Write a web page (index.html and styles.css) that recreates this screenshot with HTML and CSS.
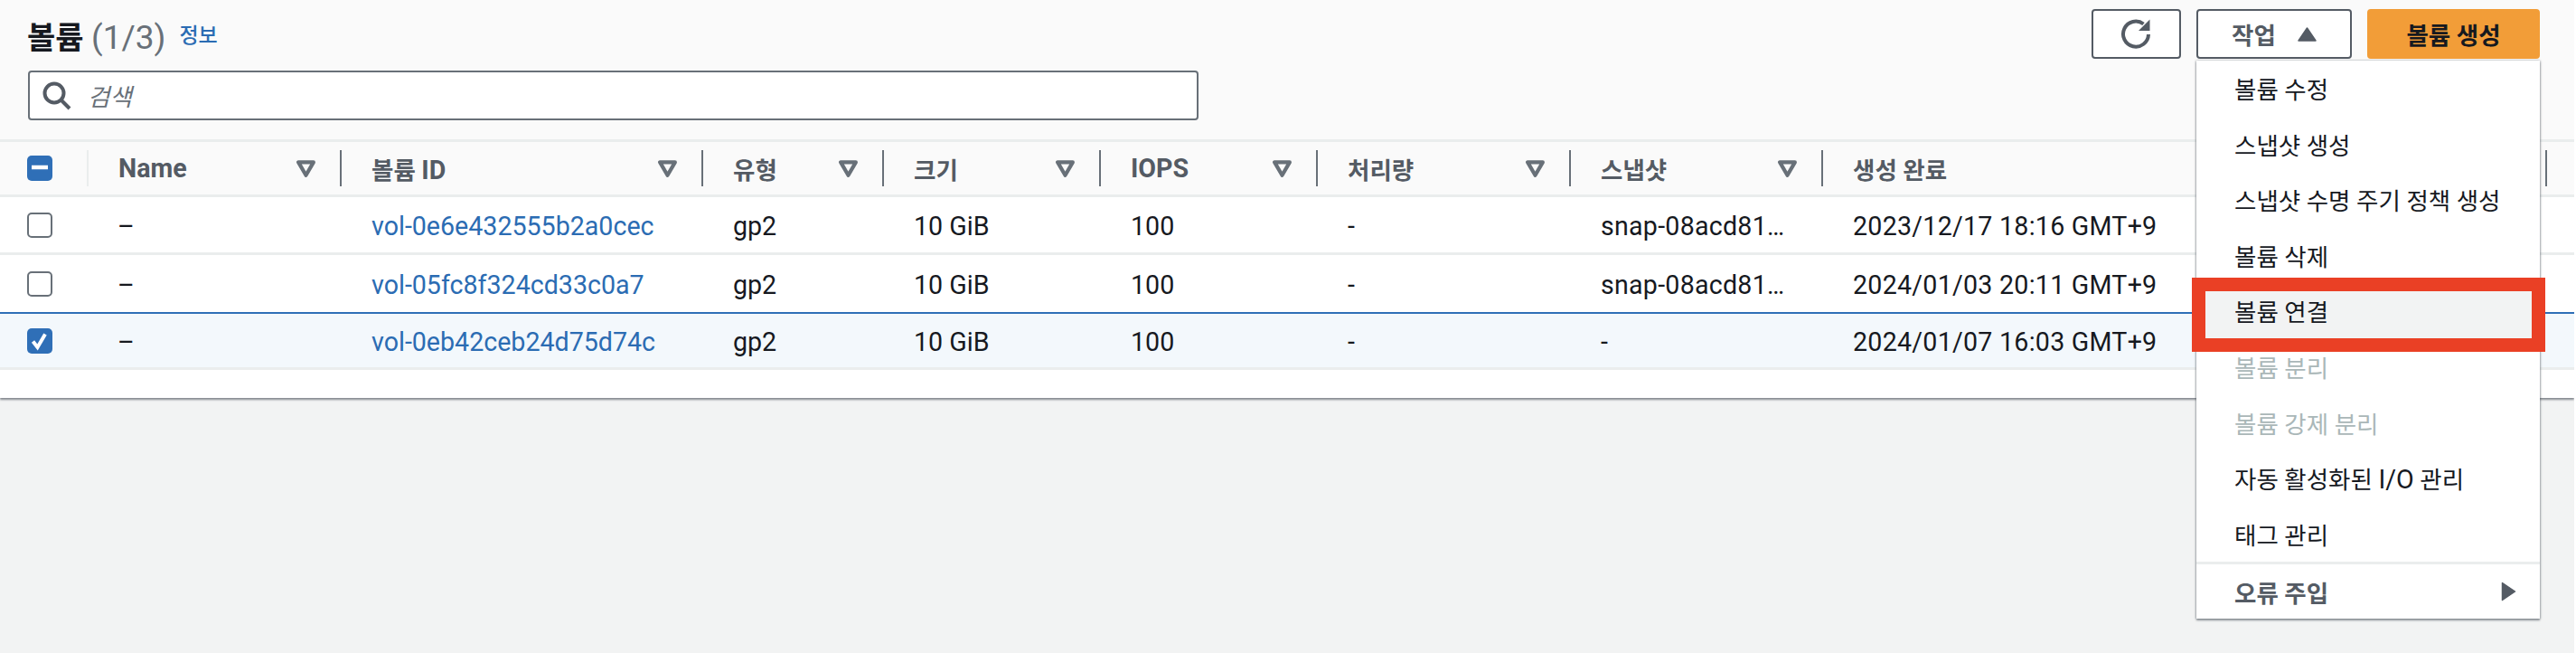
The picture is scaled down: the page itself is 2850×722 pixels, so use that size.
FILE: index.html
```html
<!DOCTYPE html>
<html lang="ko">
<head>
<meta charset="utf-8">
<title>볼륨</title>
<link rel="stylesheet" href="styles.css">
</head>
<body>
<div class="page">
  <section class="panel">
    <header class="panel-head">
      <div class="title-row">
        <h2 class="title">볼륨 <span class="count">(1/3)</span></h2>
        <a class="info">정보</a>
        <div class="actions">
          <button class="btn btn-icon" aria-label="refresh">
            <svg width="36" height="36" viewBox="0 0 36 36" fill="none" stroke="#545b64" stroke-width="4">
              <path d="M31 18A14 14 0 1 1 25.5 6.5"/>
              <path d="M32.5 1.5V14H20" stroke="none" fill="#545b64"/>
            </svg>
          </button>
          <button class="btn btn-actions">작업
            <svg class="caret" width="21" height="16" viewBox="0 0 21 16"><path d="M10.5 1L20 15H1Z" fill="#545b64" stroke="#545b64" stroke-width="1.5" stroke-linejoin="round"/></svg>
          </button>
          <button class="btn btn-primary">볼륨 생성</button>
        </div>
      </div>
      <div class="search">
        <svg width="32" height="32" viewBox="0 0 32 32" fill="none" stroke="#545b64" stroke-width="4"><circle cx="13" cy="13" r="10.5"/><path d="M20.5 20.5L30 30"/></svg>
        <span class="placeholder">검색</span>
      </div>
    </header>

    <div class="table">
      <div class="row row-head">
        <div class="cell cell-check"><span class="check check-on"><svg width="28" height="28" viewBox="0 0 28 28"><path d="M5 13H23" stroke="#fff" stroke-width="4.5"/></svg></span></div>
        <div class="cell th first"><span class="lat">Name</span><svg class="sort" width="23" height="19" viewBox="0 0 22 18"><path d="M3 2.2H19L11 16Z" fill="none" stroke="#687078" stroke-width="4" stroke-linejoin="round"/></svg></div>
        <div class="cell th"><span>볼륨 <span class="lat">ID</span></span><svg class="sort" width="23" height="19" viewBox="0 0 22 18"><path d="M3 2.2H19L11 16Z" fill="none" stroke="#687078" stroke-width="4" stroke-linejoin="round"/></svg></div>
        <div class="cell th"><span>유형</span><svg class="sort" width="23" height="19" viewBox="0 0 22 18"><path d="M3 2.2H19L11 16Z" fill="none" stroke="#687078" stroke-width="4" stroke-linejoin="round"/></svg></div>
        <div class="cell th"><span>크기</span><svg class="sort" width="23" height="19" viewBox="0 0 22 18"><path d="M3 2.2H19L11 16Z" fill="none" stroke="#687078" stroke-width="4" stroke-linejoin="round"/></svg></div>
        <div class="cell th"><span class="lat">IOPS</span><svg class="sort" width="23" height="19" viewBox="0 0 22 18"><path d="M3 2.2H19L11 16Z" fill="none" stroke="#687078" stroke-width="4" stroke-linejoin="round"/></svg></div>
        <div class="cell th"><span>처리량</span><svg class="sort" width="23" height="19" viewBox="0 0 22 18"><path d="M3 2.2H19L11 16Z" fill="none" stroke="#687078" stroke-width="4" stroke-linejoin="round"/></svg></div>
        <div class="cell th"><span>스냅샷</span><svg class="sort" width="23" height="19" viewBox="0 0 22 18"><path d="M3 2.2H19L11 16Z" fill="none" stroke="#687078" stroke-width="4" stroke-linejoin="round"/></svg></div>
        <div class="cell th"><span>생성 완료</span><svg class="sort" width="23" height="19" viewBox="0 0 22 18"><path d="M3 2.2H19L11 16Z" fill="none" stroke="#687078" stroke-width="4" stroke-linejoin="round"/></svg></div>
        <div class="cell"></div>
      </div>

      <div class="row row-a">
        <div class="cell cell-check"><span class="check"></span></div>
        <div class="cell td first">–</div>
        <div class="cell td"><a class="link">vol-0e6e432555b2a0cec</a></div>
        <div class="cell td">gp2</div>
        <div class="cell td">10 GiB</div>
        <div class="cell td">100</div>
        <div class="cell td">-</div>
        <div class="cell td td-wide">snap-08acd81…</div>
        <div class="cell td td-wide">2023/12/17 18:16 GMT+9</div>
      </div>
      <div class="row row-b">
        <div class="cell cell-check"><span class="check"></span></div>
        <div class="cell td first">–</div>
        <div class="cell td"><a class="link">vol-05fc8f324cd33c0a7</a></div>
        <div class="cell td">gp2</div>
        <div class="cell td">10 GiB</div>
        <div class="cell td">100</div>
        <div class="cell td">-</div>
        <div class="cell td td-wide">snap-08acd81…</div>
        <div class="cell td td-wide">2024/01/03 20:11 GMT+9</div>
      </div>
      <div class="row row-selected">
        <div class="cell cell-check"><span class="check check-on"><svg width="28" height="28" viewBox="0 0 28 28"><path d="M6.5 14.5L11.5 21L20 6.5" fill="none" stroke="#fff" stroke-width="4"/></svg></span></div>
        <div class="cell td first">–</div>
        <div class="cell td"><a class="link">vol-0eb42ceb24d75d74c</a></div>
        <div class="cell td">gp2</div>
        <div class="cell td">10 GiB</div>
        <div class="cell td">100</div>
        <div class="cell td">-</div>
        <div class="cell td">-</div>
        <div class="cell td td-wide">2024/01/07 16:03 GMT+9</div>
      </div>
    </div>
  </section>

  <ul class="menu">
    <li class="item">볼륨 수정</li>
    <li class="item">스냅샷 생성</li>
    <li class="item">스냅샷 수명 주기 정책 생성</li>
    <li class="item">볼륨 삭제</li>
    <li class="item item-hover">볼륨 연결</li>
    <li class="item item-disabled">볼륨 분리</li>
    <li class="item item-disabled">볼륨 강제 분리</li>
    <li class="item"><span>자동 활성화된 <span class="lat">I/O</span> 관리</span></li>
    <li class="item">태그 관리</li>
    <li class="item item-group">오류 주입
      <svg width="17" height="22" viewBox="0 0 17 22"><path d="M1.5 1.5L15.5 11L1.5 20.5Z" fill="#545b64" stroke="#545b64" stroke-width="1.5" stroke-linejoin="round"/></svg>
    </li>
  </ul>
  <div class="callout"></div>
</div>
</body>
</html>
```

FILE: styles.css
```css
* { box-sizing: border-box; }
html, body { margin: 0; padding: 0; }
body {
  background: #fff;
  color: #16191f;
  font-family: "Roboto", "Noto Sans CJK KR", sans-serif;
  font-size: 26.5px;
}
.page { position: relative; width: 2850px; height: 722px; overflow: hidden; background: #f2f3f3; border-right: 2px solid #fff; }
.lat { font-size: 28.6px; }
.panel { width: 2848px; background: #fff; box-shadow: 0 2px 2px rgba(84, 91, 100, 0.7); }
.panel-head { height: 154px; background: #fafafa; padding: 10px 38px 0 31px; }
.title-row { display: flex; align-items: flex-start; height: 68px; }
.title { margin: 0 0 0 -1px; padding-top: 10px; font-size: 34px; font-weight: 700; line-height: 44px; }
.count { font-size: 37px; font-weight: 400; color: #687078; }
.info { margin: 18px 0 0 15px; color: #2b6cb3; font-size: 23px; font-weight: 500; line-height: 24px; }
.actions { display: flex; margin-left: auto; gap: 17px; }
.btn {
  height: 55px; border: 2px solid #545b64; border-radius: 4px; background: #fff;
  font: inherit; font-weight: 700; color: #545b64; padding: 0;
  display: flex; align-items: center; justify-content: center;
}
.btn-icon { width: 99px; }
.btn-actions { width: 172px; gap: 24px; }
.btn-primary { width: 191px; background: #f29d38; border-color: #f29d38; color: #16191f; }
.search {
  width: 1295px; height: 55px; border: 2px solid #687078; border-radius: 4px; background: #fff;
  display: flex; align-items: center; gap: 18px; padding-left: 14px;
}
.placeholder { font-style: italic; color: #687078; }
.table { width: 100%; padding-bottom: 31px; }
.row {
  display: grid;
  grid-template-columns: 98px 280px 400px 200px 240px 240px 280px 279px 801px 1fr;
  align-items: stretch;
  border-bottom: 3px solid #eaeded;
}
.row-head { height: 64px; border-top: 3px solid #eaeded; background: #fafafa; }
.row-a { height: 64px; }
.row-b { height: 65px; border-bottom: 2px solid #2f6fb7; }
.row-selected { height: 62px; background: #f3f8fc; }
.cell { display: flex; align-items: center; min-width: 0; position: relative; }
.cell-check { padding-left: 30px; }
.check {
  width: 28px; height: 28px; border: 2px solid #687078; border-radius: 5px; background: #fff; display: block;
}
.check-on { border: 0; background: #2f6fb7; }
.check svg { display: block; }
.th, .td { padding-left: 33px; white-space: nowrap; }
.td { padding-top: 2px; font-size: 28.6px; }
.td-wide { letter-spacing: 0.25px; }
.first.td { padding-left: 32px; }
.th { justify-content: space-between; padding-right: 28px; font-weight: 700; color: #545b64; }
.th::after {
  content: ""; position: absolute; right: 0; top: 9px; width: 2px; height: 40px; background: #687078;
}
.th.first::before {
  content: ""; position: absolute; left: -2px; top: 9px; width: 2px; height: 40px; background: #eaeded;
}
.link { color: #2b6cb3; }
.menu {
  position: absolute; left: 2430px; top: 67px; width: 380px; margin: 0; padding: 0; list-style: none;
  background: #fff; box-shadow: 0 2px 2px rgba(84, 91, 100, 0.6), -1px 0 2px rgba(84, 91, 100, 0.35), 1px 0 2px rgba(84, 91, 100, 0.35);
}
.item { height: 61.6px; padding-left: 42px; display: flex; align-items: center; }
.item-hover { background: #f2f3f3; border-bottom: 1px solid #5a6a90; }
.item-disabled { color: #aab7b8; }
.item-group {
  height: 62.6px; border-top: 3px solid #eaeded; font-weight: 700; color: #545b64;
  justify-content: space-between; padding-right: 26px;
}
.callout {
  position: absolute; left: 2425px; top: 307px; width: 391px; height: 82px;
  border: 15px solid #ea4025;
}
```
